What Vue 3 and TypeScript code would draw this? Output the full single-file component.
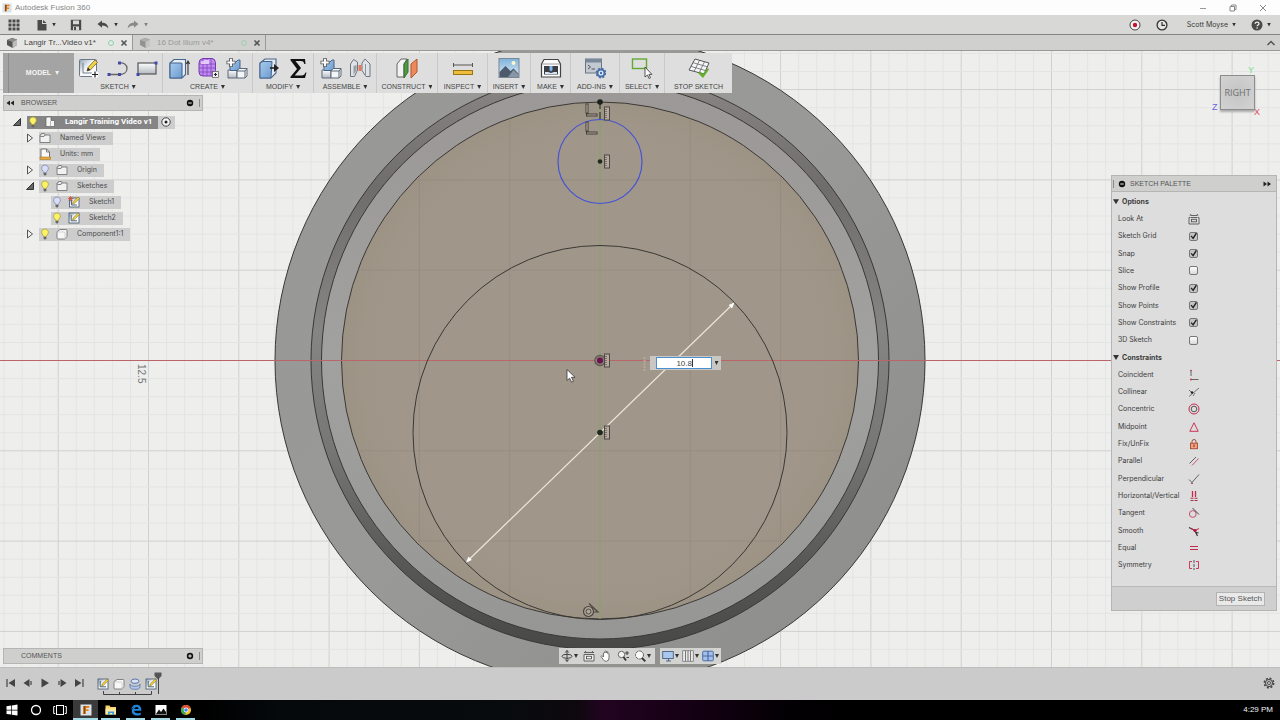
<script setup lang="ts">
import { ref } from 'vue'

interface Tool { icon: string; name: string }
interface ToolGroup { label: string; width: string; caret: boolean; tools: Tool[] }
interface TreeRow { label: string; level: number; arrow: 'open' | 'closed' | 'none'; bulb: 'on' | 'off' | 'none'; icon: string }

const groups: ToolGroup[] = [
  { label: 'SKETCH', width: 'w89', caret: true, tools: [{ icon: 'sketch', name: 'Create Sketch' }, { icon: 'arc', name: 'Line' }, { icon: 'rect', name: 'Rectangle' }] },
  { label: 'CREATE', width: 'w90', caret: true, tools: [{ icon: 'extrude', name: 'Extrude' }, { icon: 'form', name: 'Create Form' }, { icon: 'blocks', name: 'New Component' }] },
  { label: 'MODIFY', width: 'w61', caret: true, tools: [{ icon: 'press', name: 'Press Pull' }, { icon: 'sigma', name: 'Parameters' }] },
  { label: 'ASSEMBLE', width: 'w63', caret: true, tools: [{ icon: 'blocks', name: 'Assemble Component' }, { icon: 'joint', name: 'Joint' }] },
  { label: 'CONSTRUCT', width: 'w61', caret: true, tools: [{ icon: 'plane', name: 'Offset Plane' }] },
  { label: 'INSPECT', width: 'w50', caret: true, tools: [{ icon: 'measure', name: 'Measure' }] },
  { label: 'INSERT', width: 'w43', caret: true, tools: [{ icon: 'image', name: 'Insert Image' }] },
  { label: 'MAKE', width: 'w40', caret: true, tools: [{ icon: 'print', name: '3D Print' }] },
  { label: 'ADD-INS', width: 'w49', caret: true, tools: [{ icon: 'addins', name: 'Scripts' }] },
  { label: 'SELECT', width: 'w45', caret: true, tools: [{ icon: 'select', name: 'Select' }] },
  { label: 'STOP SKETCH', width: 'w67', caret: false, tools: [{ icon: 'stop', name: 'Stop' }] },
]

const rows: TreeRow[] = [
  { label: 'Named Views', level: 1, arrow: 'closed', bulb: 'none', icon: 'folder' },
  { label: 'Units: mm', level: 1, arrow: 'none', bulb: 'none', icon: 'units' },
  { label: 'Origin', level: 1, arrow: 'closed', bulb: 'off', icon: 'folder' },
  { label: 'Sketches', level: 1, arrow: 'open', bulb: 'on', icon: 'folder' },
  { label: 'Sketch1', level: 2, arrow: 'none', bulb: 'off', icon: 'sk-red' },
  { label: 'Sketch2', level: 2, arrow: 'none', bulb: 'on', icon: 'sk' },
  { label: 'Component1:1', level: 1, arrow: 'closed', bulb: 'on', icon: 'body' },
]

const options = ref([
  { label: 'Sketch Grid', on: true },
  { label: 'Snap', on: true },
  { label: 'Slice', on: false },
  { label: 'Show Profile', on: true },
  { label: 'Show Points', on: true },
  { label: 'Show Constraints', on: true },
  { label: '3D Sketch', on: false },
])

const constraints: Tool[] = [
  { icon: 'c-coincident', name: 'Coincident' },
  { icon: 'c-collinear', name: 'Collinear' },
  { icon: 'c-concentric', name: 'Concentric' },
  { icon: 'c-midpoint', name: 'Midpoint' },
  { icon: 'c-fix', name: 'Fix/UnFix' },
  { icon: 'c-parallel', name: 'Parallel' },
  { icon: 'c-perp', name: 'Perpendicular' },
  { icon: 'c-hv', name: 'Horizontal/Vertical' },
  { icon: 'c-tangent', name: 'Tangent' },
  { icon: 'c-smooth', name: 'Smooth' },
  { icon: 'c-equal', name: 'Equal' },
  { icon: 'c-symmetry', name: 'Symmetry' },
]

const navView = [
  { icon: 'n-orbit', name: 'Orbit', caret: true },
  { icon: 'n-look', name: 'Look At', caret: false },
  { icon: 'n-hand', name: 'Pan', caret: false },
  { icon: 'n-zoom', name: 'Zoom', caret: false },
  { icon: 'n-window', name: 'Zoom Window', caret: true },
]
const navDisplay = [
  { icon: 'n-display', name: 'Display Settings', caret: true },
  { icon: 'n-grid', name: 'Grid and Snaps', caret: true },
  { icon: 'n-views', name: 'Viewports', caret: true },
]

const playback = [
  { icon: 't-first', name: 'Go to start' },
  { icon: 't-back', name: 'Step back' },
  { icon: 't-play', name: 'Play' },
  { icon: 't-next', name: 'Step forward' },
  { icon: 't-last', name: 'Go to end' },
]
const features = [
  { icon: 'sk', name: 'Sketch1 feature' },
  { icon: 'body', name: 'Component feature' },
  { icon: 'revolve', name: 'Revolve feature' },
  { icon: 'sk', name: 'Sketch2 feature' },
]
const apps = [
  { icon: 'a-fusion', name: 'Fusion 360', active: true },
  { icon: 'a-folder', name: 'File Explorer', active: false },
  { icon: 'a-edge', name: 'Edge', active: false },
  { icon: 'a-photos', name: 'Photos', active: false },
  { icon: 'a-chrome', name: 'Chrome', active: false },
]

const diameter = ref('10.8')

// Sketch grid: five minor cells per major cell, centred on the origin.
const origin = { x: 600, y: 360.5 }
const cell = 18.06
const range = (from: number, to: number) => Array.from({ length: to - from + 1 }, (_, i) => from + i)
const columns = range(-60, 64).map((i) => ({ at: origin.x + i * cell, major: i % 5 === 0 }))
const lines = range(-40, 40).map((i) => ({ at: origin.y + i * cell, major: i % 5 === 0 }))
const innerColumns = columns.filter((c) => c.major)
const innerLines = lines.filter((c) => c.major)
</script>

<template>
  <div class="app">
    <svg class="sprite" aria-hidden="true">
      <defs>
        <linearGradient id="gBlue" x1="0" y1="0" x2="1" y2="1"><stop offset="0" stop-color="#a9cbee" /><stop offset="1" stop-color="#6a9bd0" /></linearGradient>
        <linearGradient id="gGrey" x1="0" y1="0" x2="0" y2="1"><stop offset="0" stop-color="#fdfdfd" /><stop offset="1" stop-color="#b4b9c2" /></linearGradient>
        <linearGradient id="gPaper" x1="0" y1="0" x2="1" y2="1"><stop offset="0" stop-color="#8fa2b5" /><stop offset=".45" stop-color="#f4f6f8" /><stop offset="1" stop-color="#fff" /></linearGradient>
        <linearGradient id="gSky" x1="0" y1="0" x2="0" y2="1"><stop offset="0" stop-color="#7fb2dd" /><stop offset="1" stop-color="#dcecf6" /></linearGradient>
      </defs>

      <symbol id="sketch" viewBox="0 0 22 22">
        <rect x="1.5" y="2.5" width="17" height="17" rx="1" fill="url(#gPaper)" stroke="#6b7887" />
        <path d="M5 6v10h10" fill="none" stroke="#71808f" />
        <path d="M9 14l1-3.500 7-7.500 2.500 2.300-7 7.500z" fill="#f2d445" stroke="#6f6224" stroke-width=".8" />
        <path d="M9 14l1-3.500 2.500 2.500z" fill="#333" />
        <circle cx="17" cy="17.500" r="3.500" fill="#fff" /><path d="M17 14.500v6M14 17.500h6" stroke="#222" stroke-width="1.200" />
      </symbol>
      <symbol id="arc" viewBox="0 0 22 22">
        <path d="M2 17.500h10.500M12.500 6c4-.5 7.500 1.500 7.500 5.500s-3.500 6-7.500 6" fill="none" stroke="#666" stroke-width="1.300" />
        <path d="M.5 16h3v3h-3zM11 16h3v3h-3zM11 4.500h3v3h-3z" fill="#3f4aa8" />
      </symbol>
      <symbol id="rect" viewBox="0 0 22 22">
        <rect x="2" y="6" width="18" height="11" fill="url(#gGrey)" stroke="#555" stroke-width="1.200" />
        <path d="M.5 16h3v3h-3zM18.500 4.500h3v3h-3z" fill="#3f4aa8" />
      </symbol>
      <symbol id="extrude" viewBox="0 0 22 22">
        <path d="M2 6l4-3.500h11.500v15L14 21H2z" fill="#e8eef5" stroke="#46658a" stroke-width="1.100" />
        <rect x="2" y="6" width="12" height="15" rx="1" fill="url(#gBlue)" stroke="#46658a" stroke-width="1.100" />
        <path d="M20 18V5M18.300 7L20 4l1.700 3" fill="none" stroke="#333" stroke-width="1.100" />
      </symbol>
      <symbol id="form" viewBox="0 0 22 22">
        <path d="M6 1.500h9q3 0 3.500 4v8q0 3-3 5.500H6q-4 0-4-4V6q0-4 4-4.500z" fill="#bf8bee" stroke="#7438ab" />
        <path d="M2 7h16M2 11h16M2 15h16M6 2v17M10 2v17M14 2v17" stroke="#8545c0" stroke-width=".8" />
        <path d="M4 5l4-2h4v4H4z" fill="#e3c9fa" />
        <rect x="15.500" y="14.500" width="6" height="6" fill="#eee" stroke="#555" stroke-width=".7" /><path d="M18.500 16v3M17 17.500h3" stroke="#222" />
      </symbol>
      <symbol id="blocks" viewBox="0 0 22 22">
        <path d="M2 13h9v8H2z" fill="url(#gGrey)" stroke="#5b6878" />
        <path d="M4 5h6l2-2h2v9l-3 1.500H4z" fill="url(#gBlue)" stroke="#46658a" />
        <path d="M11 14l2-2.500h8V19l-2 2h-8z" fill="#f3f5f8" stroke="#5b6878" /><path d="M11 14h8v7M19 14l2-2.500" fill="none" stroke="#5b6878" />
        <path d="M5 1v9M.500 5.500h9" stroke="#555" stroke-width="3.600" /><path d="M5 1.800v7.400M1.300 5.500h7.400" stroke="#fff" stroke-width="1.900" />
      </symbol>
      <symbol id="press" viewBox="0 0 22 22">
        <path d="M2 6l5-4h11v14l-5 5H2z" fill="#e3eaf2" stroke="#46658a" stroke-width="1.100" />
        <path d="M2 6l3-1.500h9L13 21H2z" fill="url(#gBlue)" stroke="#46658a" />
        <path d="M12 11h4" stroke="#222" stroke-width="1.600" /><path d="M16 7l5 4-5 4z" fill="#222" />
      </symbol>
      <symbol id="sigma" viewBox="0 0 22 22">
        <path d="M3.500 2h14.500l.5 5h-1.200c-.6-2.400-1.500-3-3.600-3H8.500l5.500 7-6.300 7.500h7c2 0 3-1 3.800-3h1L18 21H3.500v-1.200L10 12 3.500 3.300z" fill="#111" />
      </symbol>
      <symbol id="joint" viewBox="0 0 22 22">
        <path d="M1.500 7l3-4.500L8.500 5v8l-3 6.500h-4z" fill="#dfe3e8" stroke="#6d747c" /><path d="M4.500 9l3-1v5l-3 5z" fill="#979ea6" />
        <path d="M13 6l3-4 5 5v12.500h-4l-4-6z" fill="#dfe3e8" stroke="#6d747c" /><path d="M16.500 7v12" stroke="#8d949c" />
        <path d="M9.500 8h3v6h-3z" fill="#e2795a" />
      </symbol>
      <symbol id="plane" viewBox="0 0 22 22">
        <path d="M1 7l4-5h6l-3 5v13H1z" fill="#f3f3f3" stroke="#666" /><path d="M8 7l4-5v13l-4 6z" fill="#4f9a42" stroke="#396f30" />
        <path d="M15 7l6-5v13l-6 6z" fill="#ec8a5c" stroke="#b0572d" />
      </symbol>
      <symbol id="measure" viewBox="0 0 22 22">
        <path d="M1.500 8h19M1.500 6v4M20.500 6v4" stroke="#555" fill="none" /><rect x="1.500" y="13.500" width="19" height="4" fill="#eebd3c" stroke="#9b7414" />
      </symbol>
      <symbol id="image" viewBox="0 0 22 22">
        <rect x="1" y="1.500" width="20" height="19" fill="url(#gSky)" stroke="#7b8791" /><circle cx="15.500" cy="6" r="2" fill="#fff6c9" />
        <path d="M1.500 15l6-6 5 5 3-2.500 5 5V20h-19z" fill="#4d5a6b" /><path d="M10 20l5.500-7 5 4.500V20z" fill="#8795a6" />
      </symbol>
      <symbol id="print" viewBox="0 0 22 22">
        <path d="M1.500 7L4 2.500h14L20.500 7v13h-19z" fill="#fbfbfb" stroke="#444" stroke-width="1.200" /><path d="M1.500 7h19" stroke="#888" stroke-width=".8" />
        <rect x="4" y="9" width="14" height="8.500" fill="#3b3f45" /><path d="M9.500 9h3v4L11 14.500 9.500 13z" fill="#7eb4f0" /><path d="M5 15h3l3 1 3-1h3v2H5z" fill="#d7e4f3" />
      </symbol>
      <symbol id="addins" viewBox="0 0 22 22">
        <rect x="1.500" y="2" width="16" height="14" fill="#c3c9d1" stroke="#6d7681" /><rect x="1.500" y="2" width="16" height="3.500" fill="#79889a" />
        <path d="M4 8l2.500 2L4 12M7.500 12h3.500" fill="none" stroke="#555" />
        <circle cx="17" cy="16" r="3.500" fill="#dfeafa" stroke="#4a6fa8" stroke-width="2" /><circle cx="17" cy="16" r="4.600" fill="none" stroke="#4a6fa8" stroke-width="1.600" stroke-dasharray="2 1.600" /><circle cx="17" cy="16" r="1.200" fill="#4a6fa8" />
      </symbol>
      <symbol id="select" viewBox="0 0 22 22">
        <rect x="1.500" y="2" width="14" height="9.500" fill="none" stroke="#62a835" stroke-width="1.400" />
        <path d="M14 10v10l2.500-2 1.500 3.500 1.500-.8-1.600-3.300h3z" fill="#fff" stroke="#444" stroke-width=".9" />
      </symbol>
      <symbol id="stop" viewBox="0 0 22 22">
        <path d="M7 2l14 4-5 11L1 13z" fill="#f5f6f8" stroke="#555" /><path d="M11.500 3.300L6 14.500M16.500 4.800L11 16M5 5.700l14 4M3 9.400l14 4" stroke="#666" stroke-width=".8" />
        <path d="M10 16l2.500-1.500 2 2.500L20 11l1 1.500-6 8.500z" fill="#63ad2f" />
      </symbol>

      <symbol id="bulb-on" viewBox="0 0 12 12"><path d="M6 1a3.300 3.300 0 0 1 2 6c-.5.400-.6.900-.6 1.500H4.600c0-.6-.1-1.100-.6-1.500a3.300 3.300 0 0 1 2-6z" fill="#fbf267" stroke="#a59a2c" stroke-width=".7" /><path d="M4.600 9h2.800v1.500L6.500 11.500h-1l-.9-1z" fill="#666" /></symbol>
      <symbol id="bulb-off" viewBox="0 0 12 12"><path d="M6 1a3.300 3.300 0 0 1 2 6c-.5.400-.6.900-.6 1.500H4.600c0-.6-.1-1.100-.6-1.500a3.300 3.300 0 0 1 2-6z" fill="#d7def5" stroke="#7683b2" stroke-width=".7" /><path d="M4.600 9h2.800v1.500L6.500 11.500h-1l-.9-1z" fill="#666" /></symbol>
      <symbol id="folder" viewBox="0 0 12 12"><path d="M1 3h1l.5-1.500h3L6 3h5v7.500H1zM1.200 4.500H5L6 3" fill="#f1f1f1" stroke="#777" stroke-width=".9" /></symbol>
      <symbol id="units" viewBox="0 0 12 12"><path d="M2 1h5.500l3 3v6H2z" fill="#fafafa" stroke="#666" stroke-width=".9" /><path d="M7.500 1v3h3" fill="none" stroke="#666" stroke-width=".8" /><path d="M1 9h10.500v2.500H1z" fill="#e8a93d" stroke="#a06e15" stroke-width=".5" /></symbol>
      <symbol id="sk" viewBox="0 0 12 12"><rect x="1" y="1" width="10" height="10" fill="url(#gPaper)" stroke="#4f6175" stroke-width=".9" /><path d="M3.200 3v5.800H9" fill="none" stroke="#4f6175" /><path d="M4.500 8l.7-2L10 1l1.500 1.500L6.500 7.300z" fill="#f0cf3a" stroke="#7b6a1e" stroke-width=".5" /></symbol>
      <symbol id="sk-red" viewBox="0 0 12 12"><rect x="1.500" y="2" width="9.500" height="9" fill="url(#gPaper)" stroke="#4f6175" stroke-width=".9" /><path d="M3.600 4v5H9" fill="none" stroke="#4f6175" /><path d="M4.500 8l.7-2L10 1l1.500 1.500L6.500 7.300z" fill="#f0cf3a" stroke="#7b6a1e" stroke-width=".5" /><path d="M2.500 0v5M0 2.500h5M.700.700l3.600 3.600M4.300.700L.7 4.300" stroke="#d9523a" stroke-width=".8" /></symbol>
      <symbol id="body" viewBox="0 0 12 12"><path d="M1 4.500Q1 3.500 2 3l2-1.500h6q1 0 1 1v6L9.300 10.500q-.5.500-1 .5H2q-1 0-1-1z" fill="#f7f7f7" stroke="#777" stroke-width=".9" /><path d="M2 4h6q1 0 1 1v5" fill="none" stroke="#bbb" stroke-width=".6" /></symbol>
      <symbol id="comp" viewBox="0 0 12 12"><path d="M2 2.500L3 1h4v3.500h3.500v6H2z" fill="#f5f5f5" stroke="#555" stroke-width=".6" /><path d="M6.500 5v5.500" stroke="#999" stroke-width=".7" /></symbol>
      <symbol id="revolve" viewBox="0 0 12 12"><ellipse cx="6" cy="3.200" rx="4" ry="2.200" fill="#d6e2f5" stroke="#5a75a8" /><path d="M1 6c0 1.800 2.500 2.300 5 2.300S11 7.800 11 6v3c0 1.700-2.500 2.300-5 2.300S1 10.700 1 9z" fill="#b4c8e8" stroke="#5a75a8" stroke-width=".8" /></symbol>

      <symbol id="c-look" viewBox="0 0 12 12"><path d="M1 4.500h1M10 4.500h1M1 4.500V11h10V4.500M2.500 4.500h7M2.500 2.500h7M3 1l-1 1.500M9 1l1 1.500" fill="none" stroke="#555" stroke-width=".9" /><rect x="3.500" y="6.300" width="5" height="2.500" fill="none" stroke="#555" stroke-width=".9" /></symbol>
      <symbol id="c-coincident" viewBox="0 0 12 12"><path d="M3 1.500v5.500M4 10.500h6.500" stroke="#666" /><circle cx="3" cy="10.500" r=".9" fill="#b23" /><circle cx="3" cy="1.500" r=".8" fill="#b23" /></symbol>
      <symbol id="c-collinear" viewBox="0 0 12 12"><path d="M1 10.500L11 2M1 4l3 3M5 10l2-3" stroke="#666" stroke-width=".9" /><circle cx="4" cy="6.500" r="1.200" fill="#222" /></symbol>
      <symbol id="c-concentric" viewBox="0 0 12 12"><circle cx="6" cy="6" r="5" fill="none" stroke="#c22b4f" /><circle cx="6" cy="6" r="2.800" fill="none" stroke="#555" /></symbol>
      <symbol id="c-midpoint" viewBox="0 0 12 12"><path d="M6 1.800L10.200 10.300H1.800z" fill="none" stroke="#cc3358" /></symbol>
      <symbol id="c-fix" viewBox="0 0 12 12"><path d="M4 5.500V3.500a2 2 0 0 1 4 0v2" fill="none" stroke="#a34b32" /><rect x="2.500" y="5.200" width="7" height="5.500" fill="#f2a27f" stroke="#a34b32" stroke-width=".9" /><path d="M6 6.500v2.500" stroke="#7a2c18" /></symbol>
      <symbol id="c-parallel" viewBox="0 0 12 12"><path d="M1.500 8.500L8 2" stroke="#555" stroke-width=".9" /><path d="M4 10.500L10.500 3.500" stroke="#c64964" stroke-width=".9" /></symbol>
      <symbol id="c-perp" viewBox="0 0 12 12"><path d="M3.500 10L11 1.500M1 6.500L4 9.500" stroke="#555" stroke-width=".9" /><path d="M3 10.500h2" stroke="#c64964" /></symbol>
      <symbol id="c-hv" viewBox="0 0 12 12"><path d="M4.500 1v6M7.500 1v6" stroke="#c22b4f" stroke-width="1.300" /><path d="M2.500 8.300h7M2.500 10.500h7" stroke="#a83048" stroke-width="1.100" stroke-dasharray="3 1" /></symbol>
      <symbol id="c-tangent" viewBox="0 0 12 12"><circle cx="4.800" cy="7" r="3.400" fill="none" stroke="#c0506a" /><path d="M4.500 1L11 7.500" stroke="#444" /></symbol>
      <symbol id="c-smooth" viewBox="0 0 12 12"><path d="M1 2.500l5 2.500M7.500 7l2 4M7 7l3.500 1" fill="none" stroke="#333" stroke-width="1.200" /><path d="M3 3.500l4 2 4-2" fill="none" stroke="#cc2244" stroke-width="1" /><circle cx="7" cy="5.500" r="1.600" fill="#b01038" /></symbol>
      <symbol id="c-equal" viewBox="0 0 12 12"><path d="M2 4.500h8M2 7.500h8" stroke="#c22b4f" /></symbol>
      <symbol id="c-symmetry" viewBox="0 0 12 12"><path d="M4 2.500H1.500v7H4M8 2.500h2.500v7H8" fill="none" stroke="#c22b4f" stroke-width=".9" /><path d="M6 1v10" stroke="#555" stroke-dasharray="3 1" /></symbol>

      <symbol id="n-orbit" viewBox="0 0 12 12"><path d="M6 .500v11M4.300 2.500L6 .500l1.700 2M4.300 9.500L6 11.500l1.700-2" fill="none" stroke="#444" /><ellipse cx="6" cy="6.300" rx="5" ry="2" fill="none" stroke="#444" /></symbol>
      <symbol id="n-look" viewBox="0 0 12 12"><path d="M1 4.500V11h10V4.500zM1 2.500h10M3 1L1.500 2.500M9 1l1.500 1.500" fill="#eee" stroke="#555" stroke-width=".9" /><rect x="3.500" y="6.300" width="5" height="2.500" fill="#fff" stroke="#555" stroke-width=".9" /></symbol>
      <symbol id="n-hand" viewBox="0 0 12 12"><path d="M3.500 7V3q.7-1 1.300 0V1.500q.7-1 1.400 0V3 1.800q.7-1 1.400 0V3.500q.8-.8 1.400.2V8q0 3-2.800 3.300-2 0-3-1.800L1 6.300q.5-1.200 1.500-.3z" fill="#fff" stroke="#555" stroke-width=".8" /></symbol>
      <symbol id="n-zoom" viewBox="0 0 12 12"><circle cx="4.500" cy="4.500" r="3.200" fill="#f5f5f5" stroke="#666" /><path d="M6.500 7l2.500 3.500" stroke="#333" stroke-width="1.800" /><path d="M10 1v4M8 3h4M9.500 7.500H12" stroke="#333" stroke-width=".9" /></symbol>
      <symbol id="n-window" viewBox="0 0 12 12"><circle cx="5.500" cy="5" r="4" fill="#fafafa" stroke="#666" stroke-dasharray="3 .6" /><path d="M8 8l3.300 3.300" stroke="#333" stroke-width="1.800" /></symbol>
      <symbol id="n-display" viewBox="0 0 12 12"><rect x=".7" y="1.500" width="10.600" height="7" fill="#a9c8ee" stroke="#56698a" /><path d="M4 11h5M6.500 9v2" stroke="#56698a" stroke-width="1.200" /></symbol>
      <symbol id="n-grid" viewBox="0 0 12 12"><rect x=".7" y=".7" width="10.600" height="10.600" fill="#eaeaea" stroke="#777" stroke-width=".8" /><path d="M3.500 1v10M6 1v10M8.500 1v10" stroke="#777" /></symbol>
      <symbol id="n-views" viewBox="0 0 12 12"><rect x=".7" y="1.200" width="10.600" height="9.600" rx="1" fill="#a4c0ea" stroke="#4a6ba2" /><path d="M6 1v10M1 6h10" stroke="#4a6ba2" stroke-width="1.200" /></symbol>

      <symbol id="t-first" viewBox="0 0 12 12"><path d="M2 2v8" stroke="#444" stroke-width="1.200" /><path d="M10 2v8L3.500 6z" fill="#444" /></symbol>
      <symbol id="t-back" viewBox="0 0 12 12"><path d="M7.500 2v8L1.500 6z" fill="#444" /><path d="M9 4v4" stroke="#444" stroke-width="1.200" /></symbol>
      <symbol id="t-play" viewBox="0 0 12 12"><path d="M2.500 1.500v9L10 6z" fill="#444" /></symbol>
      <symbol id="t-next" viewBox="0 0 12 12"><path d="M4.500 2v8l6-4z" fill="#444" /><path d="M3 4v4" stroke="#444" stroke-width="1.200" /></symbol>
      <symbol id="t-last" viewBox="0 0 12 12"><path d="M10 2v8" stroke="#444" stroke-width="1.200" /><path d="M2 2v8l6.500-4z" fill="#444" /></symbol>

      <symbol id="a-win" viewBox="0 0 12 12"><path d="M.5 2.200l4.700-.7v4.200H.5zM5.900 1.400L11.500.500v5.200H5.900zM.5 6.400h4.700v4.200l-4.700-.7zM5.900 6.400h5.600v5.200l-5.600-.9z" fill="#fff" /></symbol>
      <symbol id="a-ring" viewBox="0 0 12 12"><circle cx="6" cy="6" r="4.500" fill="none" stroke="#fff" stroke-width="1.300" /></symbol>
      <symbol id="a-task" viewBox="0 0 14 12"><rect x="3.500" y="1.500" width="7" height="9" fill="none" stroke="#fff" /><path d="M2.200 2.500H.700v7h1.500M11.800 2.500h1.500v7h-1.500" fill="none" stroke="#fff" /></symbol>
      <symbol id="a-fusion" viewBox="0 0 12 12"><rect x=".5" y=".5" width="11" height="11" fill="#d9e2e6" /><path d="M3.500 2h6l-.8 2H6v1.300h2.500v1.800H6V10H3.500z" fill="#e8821e" /><path d="M3.500 2h2L5 10H3.500z" fill="#8c4a10" /></symbol>
      <symbol id="a-folder" viewBox="0 0 12 12"><path d="M.5 1.500h4l1 1.500H11v7.500H.5z" fill="#f6d469" /><path d="M.5 4.500H11v6H.5z" fill="#fbe7a0" /><path d="M3 11V7.500h6V11H7.300V9H4.700v2z" fill="#3b9be0" /></symbol>
      <symbol id="a-edge" viewBox="0 0 12 12"><path d="M1 6C1.500 2.500 3.800.700 6.400.700 9.500.700 11.300 3 11.300 5.500v1.300H4.200c.2 1.800 1.600 2.500 3.200 2.500 1.300 0 2.300-.3 3.300-.9v2.300c-1 .6-2.300.9-3.700.9-3 0-5.200-1.700-5.200-4.500 0-1.700 1-3.200 2.600-4C2.800 3.600 1.600 4.600 1 6zM4.300 5.100h4.300c0-1.400-.8-2.100-2-2.100s-2 .8-2.300 2.100z" fill="#1f86dd" /></symbol>
      <symbol id="a-photos" viewBox="0 0 12 12"><rect x=".5" y="1" width="11" height="10" fill="#fff" /><path d="M1 10l3-4.500 2 2.500 2.500-3.500L11 8v2.500H1z" fill="#111" /></symbol>
      <symbol id="a-chrome" viewBox="0 0 12 12"><circle cx="6" cy="6" r="5" fill="#f4c430" /><path d="M6 6L1.700 3.500A5 5 0 0 1 10.500 4z" fill="#e04a3a" /><path d="M6 6L1.700 3.500A5 5 0 0 0 5.500 11z" fill="#3aa757" /><circle cx="6" cy="6" r="2.400" fill="#fff" /><circle cx="6" cy="6" r="1.800" fill="#4285f4" /></symbol>

      <symbol id="cube" viewBox="0 0 12 12"><path d="M1 3l5-2 5 1.500v5.500L6.500 11 1 8z" fill="#555" /><path d="M1 3l5-2 5 1.500L6.500 5z" fill="#8b8b8b" /><path d="M6.500 5L11 2.500v5.500L6.500 11z" fill="#bcbcbc" /></symbol>
      <symbol id="glyph-ruler" viewBox="0 0 8 15"><rect x="1.500" y="1" width="5" height="13" fill="#b5aa9d" stroke="#4d4944" stroke-width="1" /><path d="M2 3.500h2M2 5.500h2M2 7.500h2M2 9.500h2M2 11.500h2" stroke="#4d4944" stroke-width=".6" /></symbol>
      <symbol id="glyph-corner" viewBox="0 0 14 14"><path d="M3 .500v10M2 12h11.500" stroke="#443f39" stroke-width="3" /><path d="M3 1.500v8M3 12h9.500" stroke="#b5aa9d" stroke-width="1.200" /></symbol>
    </svg>

    <header class="titlebar">
      <svg class="i10"><use href="#a-fusion" /></svg>
      <span class="title">Autodesk Fusion 360</span>
      <div class="window-buttons">
        <button aria-label="Minimize"><svg class="i10" viewBox="0 0 10 10"><path d="M2 5.500h6" stroke="#999" /></svg></button>
        <button aria-label="Restore"><svg class="i10" viewBox="0 0 10 10"><path d="M2 3.500h4.500V8H2zM3.500 3.500V2H8v4.500H6.500" fill="none" stroke="#888" /></svg></button>
        <button aria-label="Close"><svg class="i10" viewBox="0 0 10 10"><path d="M2 2l6 6M8 2L2 8" stroke="#888" /></svg></button>
      </div>
    </header>

    <div class="quickbar">
      <button class="q-grid" aria-label="Data panel"><svg class="i12" viewBox="0 0 12 12"><path d="M.5.5h3v3h-3zM4.500.5h3v3h-3zM8.500.5h3v3h-3zM.5 4.500h3v3h-3zM4.500 4.500h3v3h-3zM8.500 4.500h3v3h-3zM.5 8.500h3v3h-3zM4.500 8.500h3v3h-3zM8.500 8.500h3v3h-3z" fill="#4a4a4a" /></svg></button>
      <button class="q-file" aria-label="File"><svg class="i12" viewBox="0 0 12 12"><path d="M1.500 1H6v4h4.500v6.500h-9zM7 1l3.500 3H7z" fill="#4a4a4a" /></svg><i class="caret"></i></button>
      <button class="q-save" aria-label="Save"><svg class="i12" viewBox="0 0 12 12"><path d="M.800.800h10.400v10.400H.800z" fill="#4a4a4a" /><path d="M3 1.500h6v3.800H3zM3 7.500h6v3.500H3z" fill="#d8d8d6" /><path d="M4 8h2v3H4z" fill="#4a4a4a" /></svg></button>
      <button class="q-undo" aria-label="Undo"><svg class="i12" viewBox="0 0 12 12"><path d="M.5 5L5 1.500v2.300c3.500 0 6 1.700 6.300 5.700C10 7.500 8 6.500 5 6.500v2.300z" fill="#4a4a4a" /></svg><i class="caret"></i></button>
      <button class="q-undo faded" aria-label="Redo"><svg class="i12" viewBox="0 0 12 12"><path d="M11.500 5L7 1.500v2.300C3.500 3.800 1 5.500.700 9.500 2 7.500 4 6.500 7 6.500v2.300z" fill="#4a4a4a" /></svg><i class="caret"></i></button>
      <div class="account">
        <button aria-label="Record"><svg class="i12" viewBox="0 0 12 12"><circle cx="6" cy="6" r="5" fill="#f2f2f2" stroke="#444" /><circle cx="6" cy="6" r="2.200" fill="#c4122f" /></svg></button>
        <button aria-label="Job status"><svg class="i12" viewBox="0 0 12 12"><circle cx="6" cy="6" r="4.900" fill="#e4e4e4" stroke="#333" stroke-width="1.300" /><path d="M6 3v3.300h3" fill="none" stroke="#333" stroke-width="1.200" /></svg></button>
        <button class="user">Scott Moyse<i class="caret"></i></button>
        <button class="help" aria-label="Help"><svg class="i12" viewBox="0 0 12 12"><circle cx="6" cy="6" r="5.500" fill="#4a4a4a" /><path d="M4.200 4.700C4.200 2.500 8 2.500 8 4.700 8 6 6.100 6 6.100 7.300" fill="none" stroke="#eee" stroke-width="1.300" /><circle cx="6.100" cy="9" r=".8" fill="#eee" /></svg><i class="caret"></i></button>
      </div>
    </div>

    <nav class="tabs">
      <div class="tab current">
        <svg class="i12"><use href="#cube" /></svg><a href="#langir">Langir Tr...Video v1*</a>
        <svg class="i10" viewBox="0 0 10 10"><circle cx="5" cy="5" r="2.500" fill="none" stroke="#8fd0ad" /></svg>
        <button aria-label="Close Langir Training Video"><svg class="i10" viewBox="0 0 10 10"><path d="M2.500 2.500l5 5M7.500 2.500l-5 5" stroke="#555" stroke-width="1.600" /></svg></button>
      </div>
      <div class="tab">
        <svg class="i12 dim"><use href="#cube" /></svg><a href="#dot">16 Dot Illum v4*</a>
        <svg class="i10" viewBox="0 0 10 10"><circle cx="5" cy="5" r="2.500" fill="none" stroke="#9fcdb3" /></svg>
        <button aria-label="Close 16 Dot Illum"><svg class="i10" viewBox="0 0 10 10"><path d="M2.500 2.500l5 5M7.500 2.500l-5 5" stroke="#555" stroke-width="1.600" /></svg></button>
      </div>
      <button class="collapse" aria-label="Collapse tabs"><svg class="i10" viewBox="0 0 10 10"><path d="M1.500 7L5 3.500 8.500 7" fill="none" stroke="#555" stroke-width="1.500" /></svg></button>
    </nav>

    <main class="workspace">
      <svg class="scene" viewBox="0 51 1280 616" preserveAspectRatio="xMidYMid slice" role="img" aria-label="Sketch canvas">
        <defs>
          <linearGradient id="outerRing" x1="0" y1="0" x2="1" y2="1"><stop offset="0" stop-color="#989897" /><stop offset=".5" stop-color="#999998" /><stop offset="1" stop-color="#8b8b8a" /></linearGradient>
          <linearGradient id="groove" x1="0" y1="0" x2="0" y2="1"><stop offset="0" stop-color="#8a8785" /><stop offset=".2" stop-color="#6f6d6b" /><stop offset=".45" stop-color="#858584" /><stop offset=".65" stop-color="#777776" /><stop offset=".85" stop-color="#585857" /><stop offset="1" stop-color="#484847" /></linearGradient>
          <linearGradient id="lip" x1="0" y1="0" x2="0" y2="1"><stop offset="0" stop-color="#9b9897" /><stop offset=".5" stop-color="#a1a1a0" /><stop offset="1" stop-color="#969695" /></linearGradient>
          <radialGradient id="disk"><stop offset="0" stop-color="#a0978a" /><stop offset=".85" stop-color="#a0978a" /><stop offset="1" stop-color="#9d9385" /></radialGradient>
          <clipPath id="diskClip"><circle cx="600" cy="360.5" r="258.5" /></clipPath>
        </defs>
        <rect x="-600" y="-400" width="2500" height="1500" fill="#eeeeed" />
        <g>
          <line v-for="c in columns" :key="'c' + c.at" :x1="c.at" :x2="c.at" y1="-400" y2="1100" :class="c.major ? 'major' : 'minor'" />
          <line v-for="l in lines" :key="'l' + l.at" x1="-600" x2="1900" :y1="l.at" :y2="l.at" :class="l.major ? 'major' : 'minor'" />
        </g>
        <circle cx="600" cy="360.5" r="325" fill="url(#outerRing)" class="edge" />
        <circle cx="600" cy="360.5" r="289" fill="url(#groove)" class="edge" />
        <circle cx="600" cy="360.5" r="278.500" fill="url(#lip)" class="edge" />
        <circle cx="600" cy="360.5" r="258.500" fill="url(#disk)" class="edge" />
        <g clip-path="url(#diskClip)">
          <line v-for="c in innerColumns" :key="'ic' + c.at" :x1="c.at" :x2="c.at" y1="90" y2="640" class="inner" />
          <line v-for="l in innerLines" :key="'il' + l.at" x1="330" x2="870" :y1="l.at" :y2="l.at" class="inner" />
        </g>
        <line x1="600" y1="102" x2="600" y2="619" stroke="#86a86a" />
        <line x1="-600" y1="360.500" x2="1900" y2="360.500" stroke="#b9656a" />
        <circle cx="600" cy="432.500" r="187" fill="none" class="edge" />
        <circle cx="600" cy="161.500" r="42" fill="none" stroke="#4553d6" stroke-width="1.200" />
        <path d="M600 102v18" stroke="#222" stroke-dasharray="7 3" />
        <path d="M467 561.500L733 304" stroke="#ece6da" stroke-width="1.200" />
        <path d="M466 562.500l2.500-6 3.300 3.500zM734.500 302.500l-2.500 6-3.300-3.500z" fill="#fff" />
        <circle cx="600" cy="102" r="2.800" fill="#1c1f1c" /><circle cx="600" cy="161.500" r="2.300" fill="#1d2a1d" /><circle cx="600" cy="432.500" r="2.800" fill="#1d2a1d" />
        <circle cx="600" cy="360.500" r="5.200" fill="#857c72" stroke="#5d5850" stroke-width="1.200" /><circle cx="600" cy="360.500" r="3" fill="#6d1250" />
        <use href="#glyph-ruler" x="603" y="106" width="8" height="15" /><use href="#glyph-ruler" x="603" y="154" width="8" height="15" />
        <use href="#glyph-ruler" x="603" y="353" width="8" height="15" /><use href="#glyph-ruler" x="603" y="425" width="8" height="15" />
        <use href="#glyph-corner" x="584" y="103" width="14" height="14" /><use href="#glyph-corner" x="584" y="121" width="14" height="14" />
        <circle cx="588.500" cy="611.500" r="5" fill="#b0a698" stroke="#4c4741" stroke-width="1.200" /><circle cx="588.500" cy="611.500" r="2.500" fill="none" stroke="#4c4741" /><path d="M589 603.500l9 8.500h-4" fill="none" stroke="#4c4741" stroke-width="1.200" />
        <path d="M567 369.500v11l2.600-2.300 2 4 1.900-.9-2-4h3.600z" fill="#fff" stroke="#333" stroke-width=".8" />
        <path d="M644.500 357v14" stroke="#b3aa9d" stroke-width="2" stroke-dasharray="2 1" />
        <text x="0" y="0" transform="translate(138 364) rotate(90)" class="ruler-text">12.5</text>
      </svg>

      <div class="value-box">
        <input v-model="diameter" aria-label="Diameter" />
        <i class="text-cursor"></i>
        <button aria-label="Diameter options"><i class="caret"></i></button>
      </div>

      <div class="view-cube">
        <span class="ax-y">Y</span><span class="ax-z">Z</span><span class="ax-x">X</span>
        <button class="face">RIGHT</button>
      </div>

      <div class="toolbar">
        <button class="mode">MODEL<i class="caret"></i></button>
        <section v-for="g in groups" :key="g.label" class="group" :class="g.width">
          <div class="tools"><button v-for="t in g.tools" :key="t.icon" :aria-label="t.name"><svg class="i22"><use :href="'#' + t.icon" /></svg></button></div>
          <button class="group-label">{{ g.label }}<i v-if="g.caret" class="caret"></i></button>
        </section>
      </div>

      <aside class="browser">
        <h2 class="panel-head">
          <svg class="i10" viewBox="0 0 10 10"><path d="M5 2.500v5L1.500 5zM9 2.500v5L5.500 5z" fill="#222" /></svg><span>BROWSER</span>
          <button aria-label="Minimize browser"><svg class="i10" viewBox="0 0 10 10"><circle cx="5" cy="5" r="3.200" fill="#111" /><path d="M3.300 5h3.400" stroke="#eee" /></svg></button><i class="grip"></i>
        </h2>
        <ul class="tree">
          <li class="row level-0">
            <svg class="i10 arrow" viewBox="0 0 10 10"><path d="M8.500 1.500v7h-7z" fill="#666" stroke="#333" /></svg>
            <span class="chip root"><svg class="i12"><use href="#bulb-on" /></svg><svg class="i12"><use href="#comp" /></svg><b>Langir Training Video v1</b></span>
            <span class="active-dot"><svg class="i10" viewBox="0 0 10 10"><circle cx="5" cy="5" r="4.200" fill="#f6f6f6" stroke="#444" /><circle cx="5" cy="5" r="1.500" fill="#222" /></svg></span>
          </li>
          <li v-for="r in rows" :key="r.label" class="row" :class="'level-' + r.level">
            <svg class="i10 arrow" viewBox="0 0 10 10">
              <path v-if="r.arrow === 'open'" d="M8.500 1.500v7h-7z" fill="#666" stroke="#333" />
              <path v-else-if="r.arrow === 'closed'" d="M2.500 1l5 4-5 4z" fill="#f4f4f4" stroke="#555" />
            </svg>
            <span class="chip"><svg v-if="r.bulb !== 'none'" class="i12"><use :href="'#bulb-' + r.bulb" /></svg><svg class="i12"><use :href="'#' + r.icon" /></svg><span>{{ r.label }}</span></span>
          </li>
        </ul>
      </aside>

      <aside class="palette">
        <h2 class="panel-head">
          <i class="grip"></i><button aria-label="Minimize palette"><svg class="i10" viewBox="0 0 10 10"><circle cx="5" cy="5" r="3.200" fill="#111" /><path d="M3.300 5h3.400" stroke="#eee" /></svg></button>
          <span>SKETCH PALETTE</span><svg class="i10 end" viewBox="0 0 10 10"><path d="M1.500 2.500v5L5 5zM5.500 2.500v5L9 5z" fill="#222" /></svg>
        </h2>
        <div class="palette-list">
          <h3><i class="caret big"></i>Options</h3>
          <div class="p-row"><span>Look At</span><button aria-label="Look At"><svg class="i12"><use href="#c-look" /></svg></button></div>
          <label v-for="o in options" :key="o.label" class="p-row"><span>{{ o.label }}</span><input v-model="o.on" type="checkbox" /></label>
          <h3><i class="caret big"></i>Constraints</h3>
          <div v-for="c in constraints" :key="c.name" class="p-row"><span>{{ c.name }}</span><button :aria-label="c.name"><svg class="i12"><use :href="'#' + c.icon" /></svg></button></div>
        </div>
        <footer><button class="stop-button">Stop Sketch</button></footer>
      </aside>

      <div class="comments panel-head"><span>COMMENTS</span>
        <button aria-label="Add comment"><svg class="i10" viewBox="0 0 10 10"><circle cx="5" cy="5" r="3.200" fill="#111" /><path d="M3.300 5h3.400M5 3.300v3.400" stroke="#eee" /></svg></button><i class="grip"></i>
      </div>

      <div class="navbars">
        <div class="navbar"><button v-for="n in navView" :key="n.icon" :aria-label="n.name"><svg class="i12"><use :href="'#' + n.icon" /></svg><i v-if="n.caret" class="caret"></i></button></div>
        <div class="navbar tight"><button v-for="n in navDisplay" :key="n.icon" :aria-label="n.name"><svg class="i12"><use :href="'#' + n.icon" /></svg><i v-if="n.caret" class="caret"></i></button></div>
      </div>
    </main>

    <div class="timeline">
      <div class="playback"><button v-for="p in playback" :key="p.icon" :aria-label="p.name"><svg class="i12"><use :href="'#' + p.icon" /></svg></button></div>
      <div class="history">
        <div class="features"><button v-for="f in features" :key="f.name" :aria-label="f.name"><svg class="i12"><use :href="'#' + f.icon" /></svg></button></div>
        <svg class="track" viewBox="0 0 64 6"><path d="M8.500 1v3.500h48V1M24.500 2v2M40.500 2v2" fill="none" stroke="#444" /></svg>
      </div>
      <svg class="marker" viewBox="0 0 8 22"><path d="M.5.500h7V4L4 7.500.500 4z" fill="#555" /><path d="M4.500 6v16" stroke="#444" /></svg>
      <button class="settings" aria-label="Timeline settings"><svg class="i12" viewBox="0 0 12 12"><circle cx="6" cy="6" r="4.700" fill="none" stroke="#444" stroke-width="1.500" stroke-dasharray="2 1.690" /><circle cx="6" cy="6" r="3.600" fill="#bbb" stroke="#444" /><circle cx="6" cy="6" r="1.500" fill="#ddd" stroke="#444" stroke-width=".9" /></svg></button>
    </div>

    <div class="taskbar">
      <button class="sys" aria-label="Start"><svg class="i12"><use href="#a-win" /></svg></button>
      <button class="sys" aria-label="Cortana"><svg class="i12"><use href="#a-ring" /></svg></button>
      <button class="sys" aria-label="Task View"><svg class="i14"><use href="#a-task" /></svg></button>
      <button v-for="a in apps" :key="a.icon" class="task" :class="{ active: a.active }" :aria-label="a.name"><svg class="i12"><use :href="'#' + a.icon" /></svg></button>
      <time>4:29 PM</time>
    </div>
  </div>
</template>

<style>
html, body { margin: 0; }
</style>

<style scoped>
.app { min-height: 100vh; display: flex; flex-direction: column; font: 7px/10px Inter, "Liberation Sans", sans-serif; color: #3c3c3c; overflow: hidden; }
.sprite { position: absolute; width: 0; height: 0; }
button { border: 0; padding: 0; margin: 0; background: none; font: inherit; color: inherit; display: flex; align-items: center; }
svg { display: block; flex: none; }
.i10 { width: 10px; height: 10px; }
.i12 { width: 12px; height: 12px; }
.i14 { width: 14px; height: 12px; }
.i22 { width: 22px; height: 22px; }
.dim { opacity: .5; }
.caret { display: inline-block; flex: none; width: 4px; height: 4px; background: #333; clip-path: polygon(0 0, 100% 0, 50% 100%); }
.caret.big { width: 6px; height: 5px; }

.titlebar { height: 15px; display: flex; align-items: center; gap: 3px; padding-left: 2px; background: #fdfdfd; color: #858585; font: 8px/10px "Liberation Sans", sans-serif; }
.window-buttons { margin-left: auto; display: flex; gap: 20px; padding-right: 12px; }

.quickbar { box-sizing: border-box; height: 20px; display: flex; align-items: center; padding-left: 8px; background: #d8d8d6; border-bottom: 1px solid #858585; }
.q-file { margin-left: 16px; gap: 4px; }
.q-save { margin-left: 14px; }
.q-undo { margin-left: 15px; gap: 5px; }
.q-undo + .q-undo { margin-left: 9px; }
.faded { opacity: .55; }
.account { margin-left: auto; display: flex; align-items: center; padding-right: 9px; gap: 15px; }
.user { margin-left: 4px; gap: 4px; }
.help { gap: 4px; }

.tabs { box-sizing: border-box; height: 16px; display: flex; align-items: stretch; background: #d0d0ce; border-bottom: 1px solid #999; font: 8px/10px "Liberation Sans", sans-serif; }
.tab { box-sizing: border-box; width: 133px; display: flex; align-items: center; padding: 0 3px 0 6px; border-right: 1px solid #999; }
.tab a { flex: 1; margin-left: 6px; color: #9a9a9a; text-decoration: none; white-space: nowrap; }
.tab.current { background: #e6e6e5; }
.tab.current a { color: #444; }
.tab > button { margin-left: 3px; }
.collapse { margin-left: auto; padding-right: 4px; }

.workspace { position: relative; flex: 1; min-height: 0; overflow: hidden; }
.scene { position: absolute; inset: 0; width: 100%; height: 100%; }
.minor { stroke: #e3e4e4; }
.major { stroke: #cfd0d0; }
.inner { stroke: #8f8679; stroke-opacity: .5; }
.edge { stroke: #3a3835; stroke-width: 1; }
.ruler-text { font: 10px "Liberation Sans", sans-serif; fill: #777; }

.value-box { position: absolute; left: calc(50% + 10px); top: calc(50% - 3px); display: flex; align-items: center; height: 14px; padding-left: 6px; background: #c9c7c3; }
.value-box input { box-sizing: border-box; width: 56px; height: 12px; border: 1px solid #4b8fd0; padding: 0 19px 0 0; background: #fff; text-align: right; font: 8px/10px "Liberation Sans", sans-serif; color: #444; }
.value-box button { width: 9px; justify-content: center; }
.text-cursor { position: absolute; right: 28px; top: 3px; width: 1px; height: 8px; background: #333; }

.view-cube { position: absolute; right: 19px; top: 13px; width: 50px; height: 54px; font: 9px/10px "Liberation Sans", sans-serif; }
.face { position: absolute; left: 9px; top: 11px; width: 35px; height: 35px; border: 1px solid #8c8c8c; background: radial-gradient(#c4c4c4, #d3d3d3); box-shadow: 0 2px 2px #aaa; justify-content: center; font: 9px/12px "Open Sans", sans-serif; color: #707070; }
.ax-y { position: absolute; left: 37px; top: 1px; color: #7be08c; }
.ax-z { position: absolute; left: 1px; top: 38px; color: #6566dd; }
.ax-x { position: absolute; left: 43px; top: 43px; color: #dd4a5e; }

.toolbar { position: absolute; left: 3px; top: 2px; height: 40px; display: flex; background: #dedede; }
.mode { box-sizing: border-box; width: 71px; justify-content: center; gap: 4px; padding-left: 8px; background: #a4a4a4; color: #f6f6f6; font: bold 7px/10px "Liberation Sans", sans-serif; box-shadow: inset 5px 0 #a4a4a4, inset 6px 0 #8b8b8b; }
.mode .caret { background: #f0f0f0; }
.group { box-sizing: border-box; display: flex; flex-direction: column; align-items: center; padding-top: 4px; gap: 3px; border-right: 1px solid #c9c9c9; }
.group:last-child { border-right: 0; }
.tools { display: flex; gap: 7px; }
.group-label { gap: 3px; white-space: nowrap; color: #444; font: 7px/10px "Liberation Sans", sans-serif; }
.w89 { width: 89px; } .w90 { width: 90px; } .w61 { width: 61px; } .w63 { width: 63px; } .w50 { width: 50px; } .w43 { width: 43px; }
.w40 { width: 40px; } .w49 { width: 49px; } .w45 { width: 45px; } .w67 { width: 67px; }

.panel-head { box-sizing: border-box; margin: 0; height: 16px; display: flex; align-items: center; background: #cfcfce; border: 1px solid #b5b5b5; font: 7px/10px "Liberation Sans", sans-serif; color: #555; }
.grip { width: 1px; height: 8px; background: #888; }
.browser { position: absolute; left: 3px; top: 44px; width: 200px; }
.browser .panel-head { padding: 0 2px 0 1px; gap: 4px; }
.browser .panel-head button, .comments button { margin-left: auto; }
.browser .panel-head span { margin-left: 2px; }
.tree { list-style: none; margin: 0; padding: 3px 0 0; }
.row { height: 16px; display: flex; align-items: center; gap: 3px; }
.level-0 { padding-left: 9px; gap: 5px; }
.level-1 { padding-left: 22px; gap: 4px; }
.level-2 { padding-left: 34px; gap: 4px; }
.chip { display: flex; align-items: center; height: 13px; padding-right: 7px; background: #cdcdcd; white-space: nowrap; color: #4c4c4c; }
.chip svg + svg { margin-left: 5px; }
.chip svg + span, .chip svg + b { margin-left: 9px; }
.root { background: #858585; color: #fff; padding-right: 6px; font: 8px/10px Roboto, "Liberation Sans", sans-serif; }
.active-dot { display: flex; align-items: center; margin-left: -5px; height: 13px; padding: 0 4px 0 3px; background: #cdcdcd; }

.palette { box-sizing: border-box; position: absolute; right: 3px; top: 124px; width: 166px; background: #dddddd; border: 1px solid #b5b5b5; }
.palette .panel-head { border-width: 0 0 1px; gap: 3px; padding: 0 4px 0 1px; }
.palette .end { margin-left: auto; }
.palette-list { height: 381px; display: grid; grid-auto-rows: 1fr; padding: 1px 0 12px; }
.palette h3 { margin: 0; display: flex; align-items: center; gap: 3px; padding-left: 1px; font-size: 7px; font-weight: bold; }
.p-row { display: grid; grid-template-columns: 70px 12px; align-items: center; padding-left: 6px; white-space: nowrap; }
.p-row input { appearance: none; box-sizing: border-box; width: 9px; height: 9px; margin: 0 1px; border: 1px solid #777; border-radius: 2px; background: linear-gradient(#fff, #d8d8d8); }
.p-row input:checked { background: #c4c4c4; }
.p-row input:checked::after { content: ""; display: block; width: 7px; height: 7px; background: #222; clip-path: polygon(8% 50%, 25% 40%, 42% 64%, 82% 0, 100% 10%, 46% 96%); }
.palette footer { box-sizing: border-box; height: 24px; display: flex; align-items: center; justify-content: flex-end; padding-right: 11px; background: #cfcfcf; border-top: 1px solid #b9b9b9; }
.stop-button { box-sizing: border-box; height: 14px; padding: 0 2px; border: 1px solid #b3b3b3; background: #e9e9e9; font: 8px/10px "Liberation Sans", sans-serif; color: #555; }

.comments { position: absolute; left: 3px; bottom: 3px; width: 200px; padding: 0 2px 0 17px; gap: 4px; }
.navbars { position: absolute; left: 0; right: 0; bottom: 3px; display: flex; justify-content: center; gap: 5px; pointer-events: none; }
.navbar { display: flex; align-items: center; gap: 5px; height: 16px; padding: 0 4px 0 2px; background: #d3d3d2; pointer-events: auto; }
.navbar.tight { gap: 3px; padding-right: 2px; }
.navbar button { gap: 1px; }

.timeline { box-sizing: border-box; height: 33px; display: flex; align-items: center; padding: 0 5px 2px; background: #cbcbcb; border-top: 1px solid #bdbdbd; }
.playback { display: flex; gap: 5px; }
.history { margin: 8px 0 0 10px; width: 64px; }
.features { display: flex; gap: 4px; padding-left: 2px; }
.track { width: 64px; height: 6px; }
.marker { width: 8px; height: 22px; margin-left: -5px; }
.settings { margin-left: auto; }

.taskbar { height: 20px; display: flex; align-items: stretch; background: linear-gradient(90deg, #000 16%, #05090c 22%, #080b0e 40%, #0d080d 45%, #220421 47%, #150014 54%, #020002 62%, #000 70%); color: #f2f2f2; }
.taskbar button { justify-content: center; }
.sys { width: 24px; }
.sys + .task { margin-left: 1px; }
.task { box-sizing: border-box; width: 25px; background: linear-gradient(#a5dbe6, #a5dbe6) center bottom / 19px 2px no-repeat; }
.task.active { background: linear-gradient(#a5dbe6, #a5dbe6) center bottom / 25px 2px no-repeat, #3a3a3a; }
time { margin-left: auto; padding-right: 7px; align-self: center; font: 8px/10px "Liberation Sans", sans-serif; }
</style>
